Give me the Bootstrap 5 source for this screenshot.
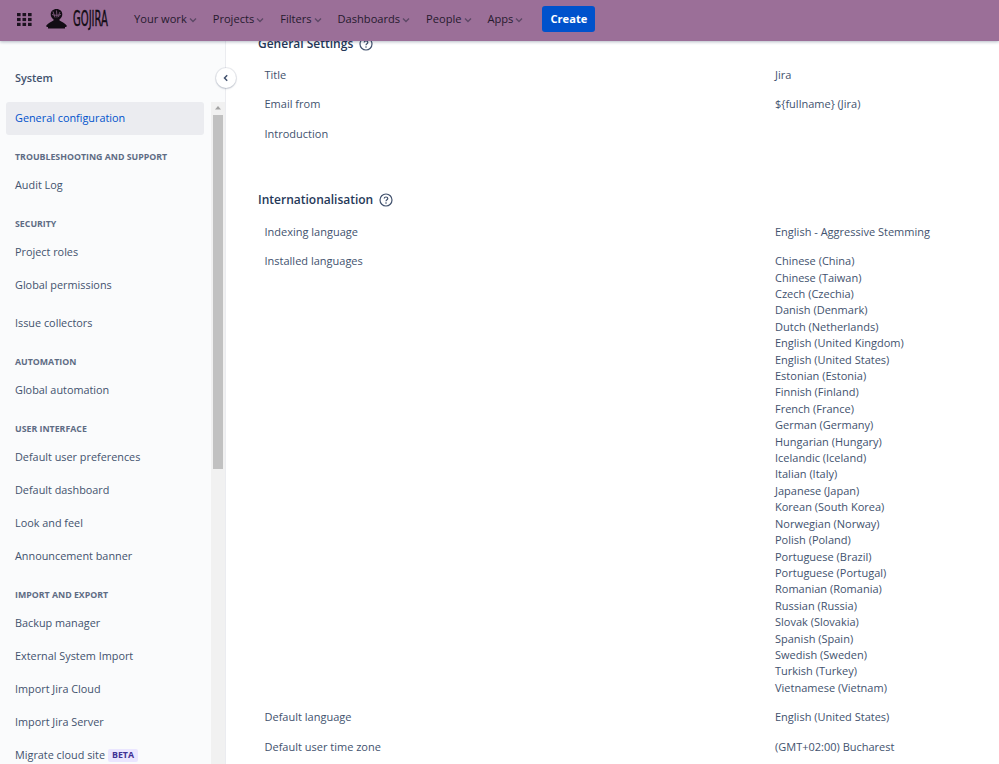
<!DOCTYPE html>
<html lang="en"><head><meta charset="utf-8"><title>System</title>
<link href="https://cdn.jsdelivr.net/npm/bootstrap@5.3.0/dist/css/bootstrap.min.css" rel="stylesheet">
<style>
html,body{height:764px;overflow:hidden;background:#fff}
body{font-family:"Open Sans","Noto Sans",sans-serif;font-size:11px;line-height:16.4px;color:#42526e}
.shell{height:764px;overflow:hidden}
.topbar{height:41px;background:#9b6f98;box-shadow:0 1px 3px rgba(9,30,66,.3);position:relative;z-index:5;padding:0 0 3px 17px}
.appgrid{width:15px;height:13px;margin-right:14px}
.logo-art{width:21px;height:20px;margin-right:6px}
.logo-word{font-family:"DejaVu Sans Condensed","Liberation Sans Narrow",sans-serif;font-size:21px;line-height:22px;font-weight:400;color:#120c14;-webkit-text-stroke:.4px #120c14;transform:scaleX(.53);transform-origin:left center;width:37px;margin-right:24px;white-space:nowrap}
.menuitem{color:#261a2e;font-weight:500;font-size:11.1px;margin-right:16px;white-space:nowrap}
.menuitem svg{margin-left:2px}
.btn-create{background:#0052cc;color:#fff;font-weight:700;font-size:11.1px;height:26px;width:53px;padding:0;border:0;border-radius:3px;margin-left:3px}
.sidepane{width:226px;flex:none;background:#fafbfc;border-right:1px solid #ebecf0;position:relative;font-size:10.85px}
.sidelist{width:211px;padding:0 7px 0 6px;flex:none}
.sidetitle{height:61px;padding:29px 9px 0;font-weight:600;color:#42526e}
.sideitem{height:33px;padding:0 9px;display:flex;align-items:center;border-radius:3px;color:#42526e;white-space:nowrap}
.sideitem.on{background:#ebecf0;color:#0052cc}
.sidehead{margin-top:15px;margin-bottom:5px;height:14px;line-height:14px;padding:0 9px;font-size:8.8px;font-weight:700;color:#5e6c84;white-space:nowrap}
.gap-extra{margin-top:5px}
.betatag{background:#eae6ff;color:#403294;font-size:8.8px;font-weight:700;border-radius:2px;padding:0 4px;margin-left:3px;line-height:13px}
.scrolltrack{width:14px;flex:none;background:#f1f1f1;margin-top:61px;height:662px;padding:0 2px}
.scrollup{height:12px;text-align:center;line-height:12px}
.scrollup svg{display:block;margin:0 auto}
.scrollthumb{height:354px;background:#c1c1c1;width:10px;margin-top:1px}
.collapser{position:absolute;left:216px;top:27px;width:20px;height:20px;border-radius:50%;background:#fff;box-shadow:0 0 0 1px rgba(9,30,66,.08),0 1px 2px rgba(9,30,66,.2);z-index:3}
.mainpane{min-width:0;padding-left:32px;overflow:hidden}
.block-head{font-size:12px;font-weight:600;color:#253858;line-height:18px;white-space:nowrap}
.block-head svg{margin-left:6px;vertical-align:-3px}
.first-head{margin-top:-6px;height:18px}
.second-head{margin-top:41.5px}
.setrow{padding:5.5px 0 7.6px 6.5px;display:flex}
.setname{width:510.5px;flex:none}
.setval{white-space:nowrap}
.rows{margin-top:8.2px}
.rows2{margin-top:9px}
</style></head>
<body>
<div class="shell d-flex flex-column">
<nav class="topbar d-flex align-items-center flex-shrink-0">
<svg class="appgrid" viewBox="0 0 15 13" aria-hidden="true"><g fill="#1d1320"><rect x="0" y="0" width="3.6" height="3.2"/><rect x="5.5" y="0" width="3.6" height="3.2"/><rect x="11" y="0" width="3.6" height="3.2"/><rect x="0" y="4.9" width="3.6" height="3.2"/><rect x="5.5" y="4.9" width="3.6" height="3.2"/><rect x="11" y="4.9" width="3.6" height="3.2"/><rect x="0" y="9.8" width="3.6" height="3.2"/><rect x="5.5" y="9.8" width="3.6" height="3.2"/><rect x="11" y="9.8" width="3.6" height="3.2"/></g></svg>
<svg class="logo-art" viewBox="0 0 21 20" aria-hidden="true"><path fill="#120c14" d="M10.500 0c3.500 0 5.800 2.300 5.800 5.200 0 2.400-1.400 4.100-2.800 5v1.300c2.300 1.200 5 2.600 7 4.700.5.700.2 1.800-.6 1.800H1.100c-.8 0-1.100-1.100-.6-1.800 2-2.100 4.700-3.500 7-4.700v-1.300C6 9.300 4.700 7.600 4.700 5.200 4.700 2.300 7 0 10.500 0z"/><path fill="#120c14" d="M2 18h17v1.500H2z"/><path fill="none" stroke="#9b6f98" stroke-width=".7" d="M7 2.500c1 2 1 4 2 6M10.500 1.500c0 2.500.5 5 .5 7M14 3c-1 1.500-1 3.500-1.500 5M6 5.500c2.500 1 6 1 9 0"/></svg>
<div class="logo-word">GOJIRA</div>
<span class="menuitem">Your work<svg width="8" height="6" viewBox="0 0 8 6"><path d="M1 1.500l3 3 3-3" fill="none" stroke="#5d4866" stroke-width="1.400"/></svg></span>
<span class="menuitem">Projects<svg width="8" height="6" viewBox="0 0 8 6"><path d="M1 1.500l3 3 3-3" fill="none" stroke="#5d4866" stroke-width="1.400"/></svg></span>
<span class="menuitem">Filters<svg width="8" height="6" viewBox="0 0 8 6"><path d="M1 1.500l3 3 3-3" fill="none" stroke="#5d4866" stroke-width="1.400"/></svg></span>
<span class="menuitem">Dashboards<svg width="8" height="6" viewBox="0 0 8 6"><path d="M1 1.500l3 3 3-3" fill="none" stroke="#5d4866" stroke-width="1.400"/></svg></span>
<span class="menuitem">People<svg width="8" height="6" viewBox="0 0 8 6"><path d="M1 1.500l3 3 3-3" fill="none" stroke="#5d4866" stroke-width="1.400"/></svg></span>
<span class="menuitem">Apps<svg width="8" height="6" viewBox="0 0 8 6"><path d="M1 1.500l3 3 3-3" fill="none" stroke="#5d4866" stroke-width="1.400"/></svg></span>
<button class="btn btn-create" type="button">Create</button>
</nav>
<div class="d-flex flex-grow-1" style="min-height:0">
<aside class="sidepane d-flex">
<div class="sidelist">
<div class="sidetitle">System</div>
<div class="sideitem on">General configuration</div>
<div class="sidehead">TROUBLESHOOTING AND SUPPORT</div>
<div class="sideitem">Audit Log</div>
<div class="sidehead">SECURITY</div>
<div class="sideitem">Project roles</div>
<div class="sideitem">Global permissions</div>
<div class="sideitem gap-extra">Issue collectors</div>
<div class="sidehead">AUTOMATION</div>
<div class="sideitem">Global automation</div>
<div class="sidehead">USER INTERFACE</div>
<div class="sideitem">Default user preferences</div>
<div class="sideitem">Default dashboard</div>
<div class="sideitem">Look and feel</div>
<div class="sideitem">Announcement banner</div>
<div class="sidehead">IMPORT AND EXPORT</div>
<div class="sideitem">Backup manager</div>
<div class="sideitem">External System Import</div>
<div class="sideitem">Import Jira Cloud</div>
<div class="sideitem">Import Jira Server</div>
<div class="sideitem">Migrate cloud site<span class="betatag">BETA</span></div>
</div>
<div class="scrolltrack"><div class="scrollup"><svg width="8" height="12" viewBox="0 0 8 12"><path d="M1 7.500l3-3.500 3 3.500z" fill="#a3a3a3"/></svg></div><div class="scrollthumb"></div></div>
<div class="collapser d-flex align-items-center justify-content-center"><svg width="8" height="8" viewBox="0 0 8 8"><path d="M5.200 1.200L2.500 4l2.700 2.800" fill="none" stroke="#42526e" stroke-width="1.500"/></svg></div>
</aside>
<main class="mainpane flex-grow-1">
<div class="block-head first-head">General Settings<svg width="14" height="14" viewBox="0 0 14 14"><circle cx="7" cy="7" r="6" fill="none" stroke="#42526e" stroke-width="1.200"/><path d="M5.200 5.600C5.200 4.500 6 4 7 4s1.800.6 1.800 1.500C8.800 6.800 7 6.800 7 8.300" fill="none" stroke="#42526e" stroke-width="1.200"/><circle cx="7" cy="10" r=".8" fill="#42526e"/></svg></div>
<div class="rows">
<div class="setrow"><div class="setname">Title</div><div class="setval">Jira</div></div>
<div class="setrow"><div class="setname">Email from</div><div class="setval">${fullname} (Jira)</div></div>
<div class="setrow"><div class="setname">Introduction</div><div class="setval"></div></div>
</div>
<div class="block-head second-head">Internationalisation<svg width="14" height="14" viewBox="0 0 14 14"><circle cx="7" cy="7" r="6" fill="none" stroke="#42526e" stroke-width="1.200"/><path d="M5.200 5.600C5.200 4.500 6 4 7 4s1.800.6 1.800 1.500C8.800 6.800 7 6.800 7 8.300" fill="none" stroke="#42526e" stroke-width="1.200"/><circle cx="7" cy="10" r=".8" fill="#42526e"/></svg></div>
<div class="rows2">
<div class="setrow"><div class="setname">Indexing language</div><div class="setval">English - Aggressive Stemming</div></div>
<div class="setrow"><div class="setname">Installed languages</div><div class="setval">Chinese (China)<br>Chinese (Taiwan)<br>Czech (Czechia)<br>Danish (Denmark)<br>Dutch (Netherlands)<br>English (United Kingdom)<br>English (United States)<br>Estonian (Estonia)<br>Finnish (Finland)<br>French (France)<br>German (Germany)<br>Hungarian (Hungary)<br>Icelandic (Iceland)<br>Italian (Italy)<br>Japanese (Japan)<br>Korean (South Korea)<br>Norwegian (Norway)<br>Polish (Poland)<br>Portuguese (Brazil)<br>Portuguese (Portugal)<br>Romanian (Romania)<br>Russian (Russia)<br>Slovak (Slovakia)<br>Spanish (Spain)<br>Swedish (Sweden)<br>Turkish (Turkey)<br>Vietnamese (Vietnam)</div></div>
<div class="setrow"><div class="setname">Default language</div><div class="setval">English (United States)</div></div>
<div class="setrow"><div class="setname">Default user time zone</div><div class="setval">(GMT+02:00) Bucharest</div></div>
</div>
</main>
</div>
</div>
<script src="https://cdn.jsdelivr.net/npm/bootstrap@5.3.0/dist/js/bootstrap.bundle.min.js"></script>
</body></html>
